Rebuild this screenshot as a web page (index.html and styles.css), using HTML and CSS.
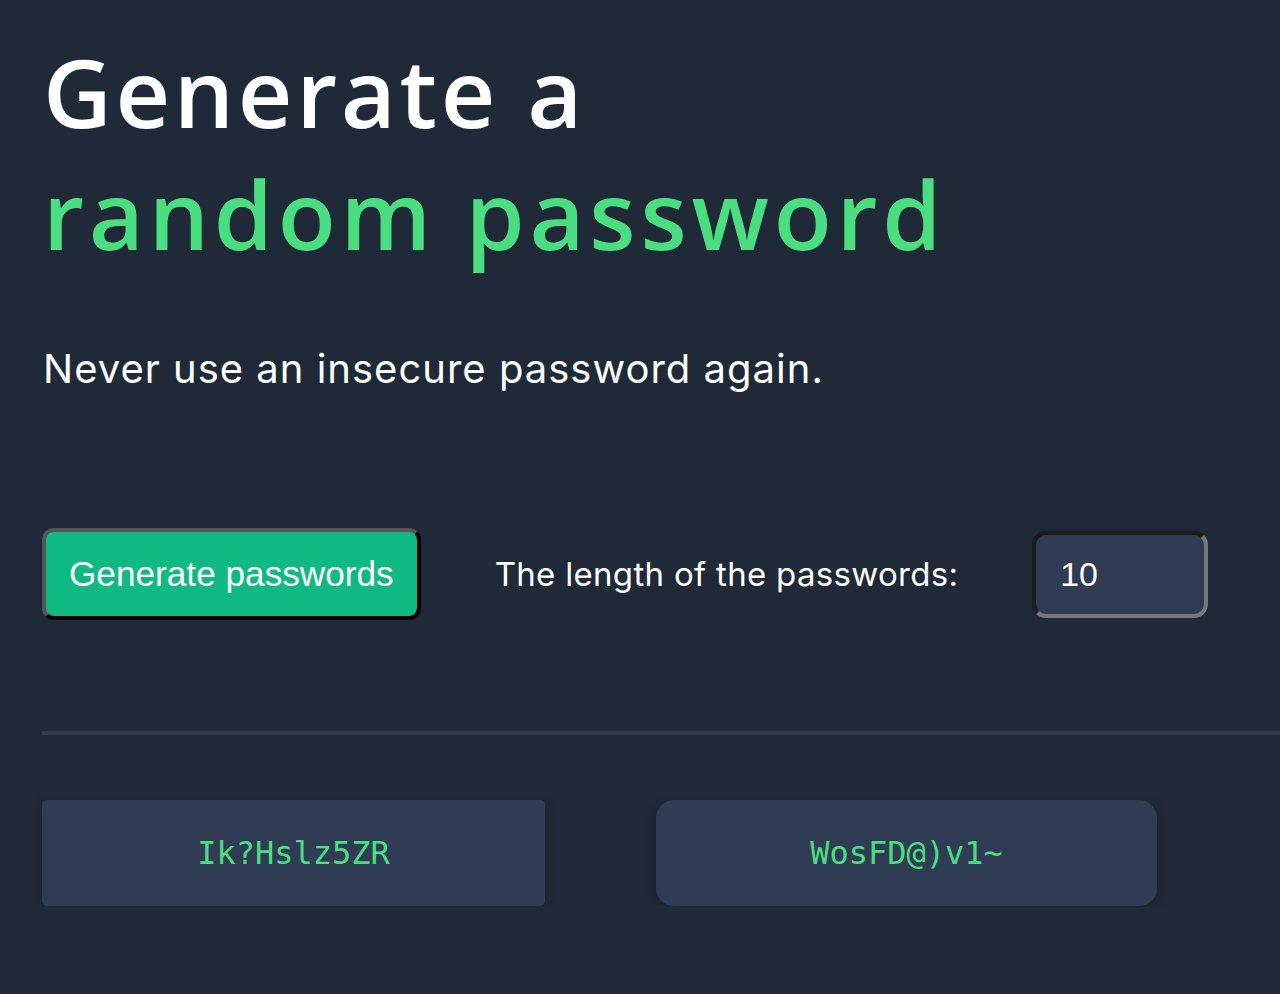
FILE: index.html
```html
<!DOCTYPE html>
<html lang="en">
<head>
<meta charset="utf-8">
<title>Password generator</title>
<link rel="stylesheet" href="styles.css">
</head>
<body>
<main class="page">
  <h1 class="title">Generate a<br><span class="accent">random password</span></h1>
  <p class="subtitle">Never use an insecure password again.</p>
  <div class="controls">
    <button class="generate-btn" type="button">Generate passwords</button>
    <label class="length-label" for="length">The length of the passwords:</label>
    <input class="length-input" id="length" type="text" value="10">
  </div>
  <hr class="divider">
  <div class="results">
    <div class="pw-card pw-card--square">Ik?Hslz5ZR</div>
    <div class="pw-card pw-card--round">WosFD@)v1~</div>
  </div>
</main>
</body>
</html>
```

FILE: styles.css
```css
html, body {
  margin: 0;
  padding: 0;
  background: #1f2937;
  overflow: hidden;
}

.page {
  padding: 0 0 0 42px;
  font-family: Inter, "Noto Sans", sans-serif;
  color: #ffffff;
}

.title {
  margin: 30px 0 0 1px;
  font-family: "Open Sans", sans-serif;
  font-size: 95px;
  line-height: 122px;
  font-weight: 600;
  letter-spacing: 3.6px;
  color: #ffffff;
}

.accent {
  color: #4ade80;
  letter-spacing: 4.8px;
}

.subtitle {
  margin: 71px 0 0 1px;
  font-size: 40px;
  line-height: 48px;
  font-weight: 400;
  letter-spacing: 1px;
}

.controls {
  margin-top: 135px;
  display: flex;
  align-items: center;
  gap: 74px;
}

.generate-btn {
  box-sizing: border-box;
  height: 92px;
  padding: 0 23px;
  background: #10b981;
  color: #ffffff;
  font-family: "Liberation Sans", Arial, sans-serif;
  font-size: 35.2px;
  border-width: 4px;
  border-style: solid;
  border-color: #555555 #000000 #000000 #555555;
  border-radius: 12px;
}

.length-label {
  font-size: 33px;
  line-height: 40px;
  font-weight: 400;
  letter-spacing: 0.3px;
}

.length-input {
  box-sizing: border-box;
  width: 176px;
  height: 87px;
  padding: 0 24px;
  background: #2f3c54;
  color: #ffffff;
  font-family: "Liberation Sans", Arial, sans-serif;
  font-size: 34px;
  border-width: 4px;
  border-style: solid;
  border-color: #1c1c1c #777777 #777777 #1c1c1c;
  border-radius: 14px;
  outline: none;
}

.divider {
  margin: 111px 0 0 0;
  height: 4px;
  border: 0;
  background: #2f3c54;
}

.results {
  margin-top: 65px;
  display: grid;
  grid-template-columns: 503px 501px;
  column-gap: 111px;
}

.pw-card {
  height: 106px;
  display: flex;
  align-items: center;
  justify-content: center;
  background: #2f3c54;
  color: #4ade80;
  font-family: "DejaVu Sans Mono", "Liberation Mono", monospace;
  font-size: 32px;
  box-shadow: 0 4px 14px rgba(0, 0, 0, 0.18);
}

.pw-card--square {
  border-radius: 5px;
}

.pw-card--round {
  border-radius: 18px;
}
```
